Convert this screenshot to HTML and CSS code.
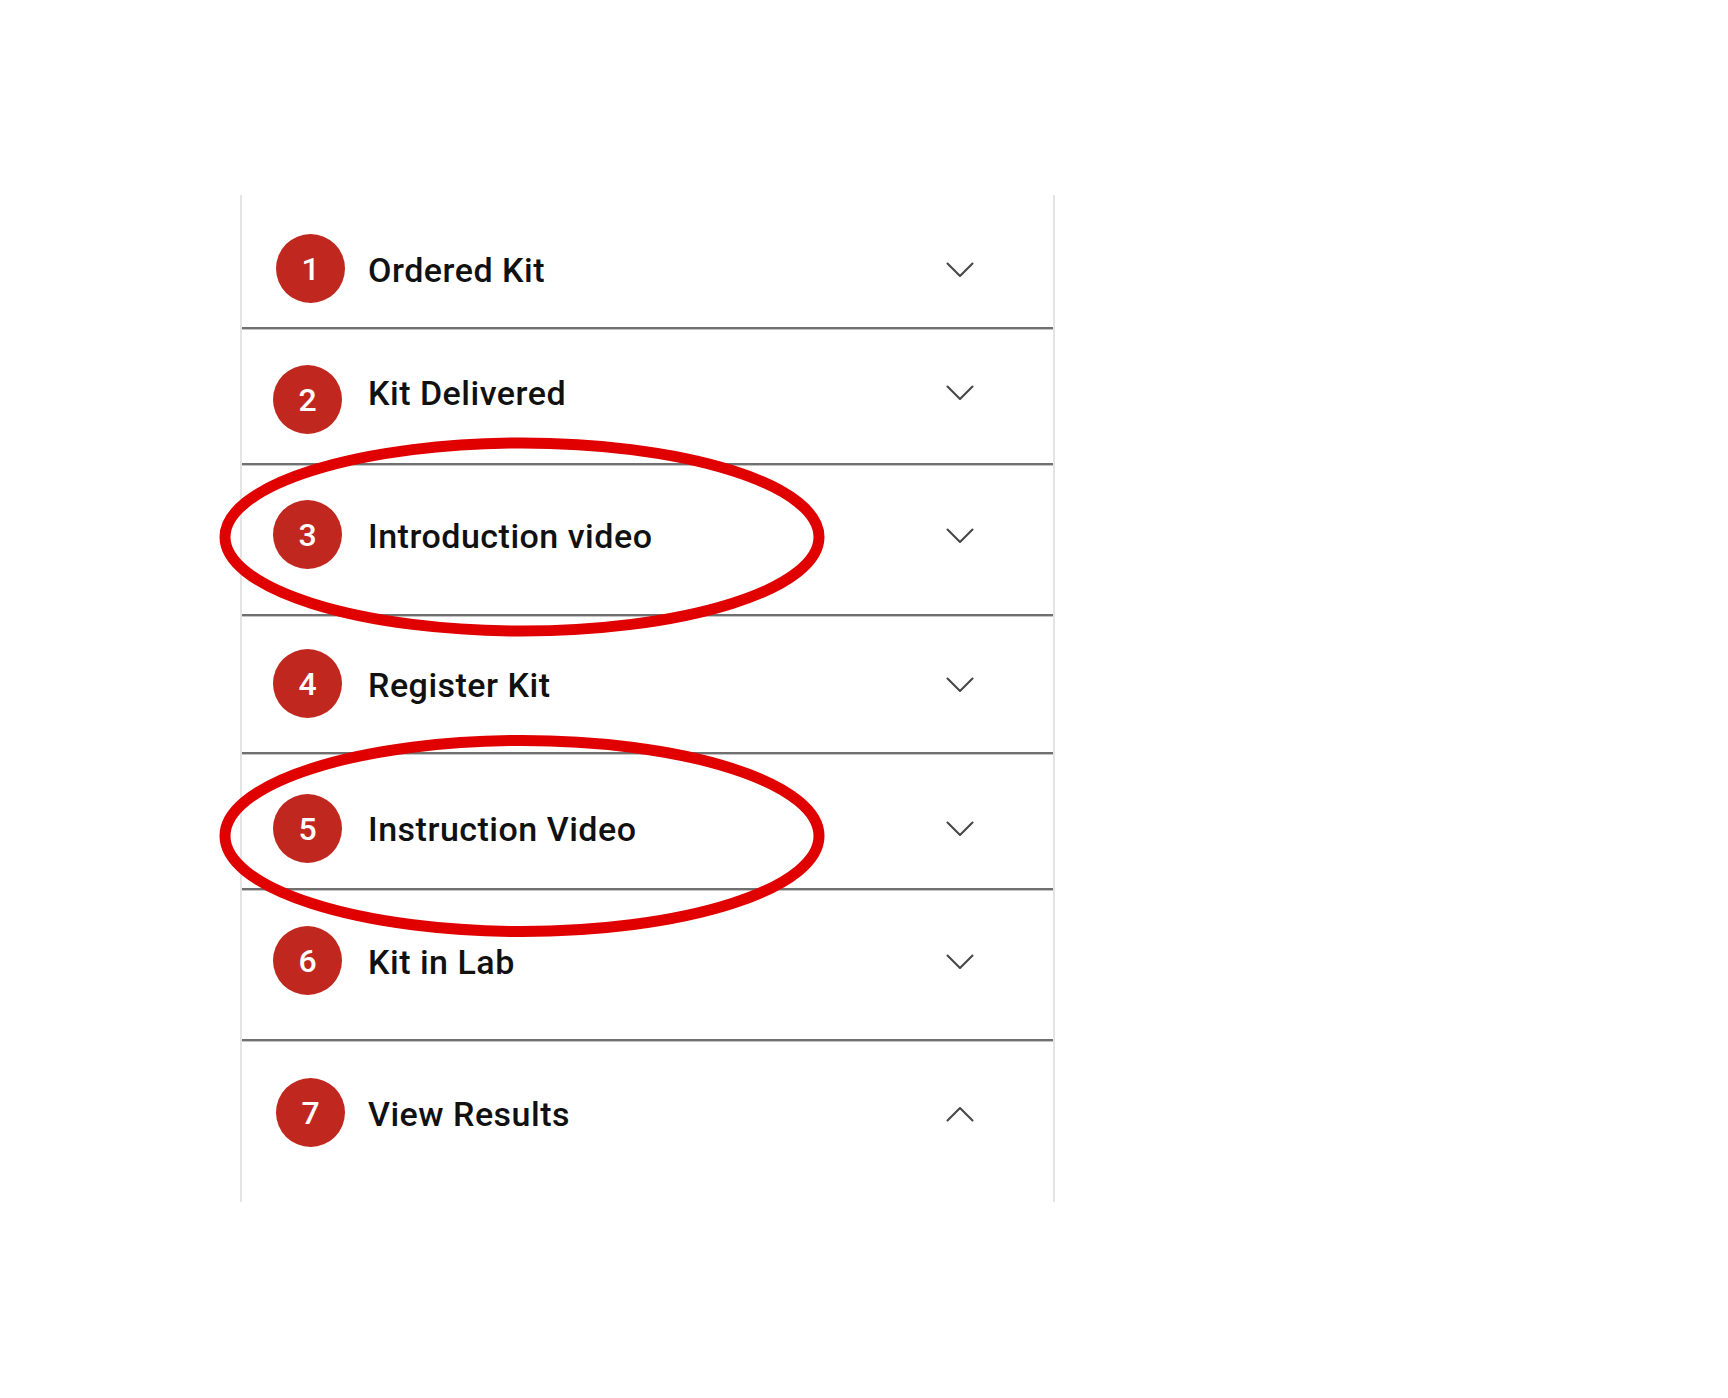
FILE: index.html
```html
<!DOCTYPE html>
<html lang="en">
<head>
<meta charset="utf-8">
<title>Kit steps</title>
<link rel="stylesheet" href="styles.css">
</head>
<body>
<div class="page">
  <section class="steps">
    <div class="step">
      <div class="step-head">
        <span class="badge">1</span>
        <span class="title">Ordered Kit</span>
        <svg class="chev" viewBox="0 0 28 16"><path d="M1.5 1.5 L14 14 L26.5 1.5"/></svg>
      </div>
    </div>
    <div class="step">
      <div class="step-head">
        <span class="badge">2</span>
        <span class="title">Kit Delivered</span>
        <svg class="chev" viewBox="0 0 28 16"><path d="M1.5 1.5 L14 14 L26.5 1.5"/></svg>
      </div>
    </div>
    <div class="step">
      <div class="step-head">
        <span class="badge">3</span>
        <span class="title">Introduction video</span>
        <svg class="chev" viewBox="0 0 28 16"><path d="M1.5 1.5 L14 14 L26.5 1.5"/></svg>
      </div>
    </div>
    <div class="step">
      <div class="step-head">
        <span class="badge">4</span>
        <span class="title">Register Kit</span>
        <svg class="chev" viewBox="0 0 28 16"><path d="M1.5 1.5 L14 14 L26.5 1.5"/></svg>
      </div>
    </div>
    <div class="step">
      <div class="step-head">
        <span class="badge">5</span>
        <span class="title">Instruction Video</span>
        <svg class="chev" viewBox="0 0 28 16"><path d="M1.5 1.5 L14 14 L26.5 1.5"/></svg>
      </div>
    </div>
    <div class="step">
      <div class="step-head">
        <span class="badge">6</span>
        <span class="title">Kit in Lab</span>
        <svg class="chev" viewBox="0 0 28 16"><path d="M1.5 1.5 L14 14 L26.5 1.5"/></svg>
      </div>
    </div>
    <div class="step">
      <div class="step-head">
        <span class="badge">7</span>
        <span class="title">View Results</span>
        <svg class="chev" viewBox="0 0 28 16"><path d="M1.5 14.5 L14 2 L26.5 14.5"/></svg>
      </div>
    </div>
  </section>

  <svg class="annotations" width="1728" height="1398" viewBox="0 0 1728 1398">
    <ellipse cx="522" cy="537" rx="297" ry="94"/>
    <ellipse cx="522" cy="836" rx="297" ry="95.5"/>
  </svg>
</div>
</body>
</html>
```

FILE: styles.css
```css
* { box-sizing: border-box; }

html, body {
  margin: 0;
  padding: 0;
  background: #ffffff;
}

body {
  font-family: Roboto, "Liberation Sans", Arial, sans-serif;
  width: 1728px;
  height: 1398px;
  overflow: hidden;
}

.page {
  position: relative;
  width: 1728px;
  height: 1398px;
  padding-top: 195px;
  padding-left: 240px;
}

.steps {
  width: 815px;
  height: 1007px;
  border-left: 2px solid #e4e4e4;
  border-right: 2px solid #e4e4e4;
  display: flex;
  flex-direction: column;
}

.step {
  border-bottom: 2px solid #707070;
  box-shadow: 0 1px 0 #c4c4c4;
  padding-left: 31px;
  padding-right: 79px;
}

.step:last-child {
  border-bottom: none;
  box-shadow: none;
}

.step:nth-child(1) { height: 134px; padding-top: 40px; }
.step:nth-child(2) { height: 136px; padding-top: 29px; }
.step:nth-child(3) { height: 151px; padding-top: 36px; }
.step:nth-child(4) { height: 138px; padding-top: 34px; }
.step:nth-child(5) { height: 136px; padding-top: 40px; }
.step:nth-child(6) { height: 151px; padding-top: 37px; }
.step:nth-child(7) { height: 161px; padding-top: 38px; }

.step:nth-child(2) .badge {
  margin-top: 14px;
}

.step:nth-child(1) .badge { margin-top: -2px; }
.step:nth-child(3) .badge,
.step:nth-child(4) .badge,
.step:nth-child(6) .badge,
.step:nth-child(7) .badge { margin-top: -2px; }

.step-head {
  display: flex;
  align-items: center;
  height: 69px;
}

.badge {
  flex: none;
  width: 69px;
  height: 69px;
  border-radius: 50%;
  background: #c0281f;
  color: #ffffff;
  font-size: 32px;
  font-weight: 500;
  display: flex;
  align-items: center;
  justify-content: center;
  margin-right: 26px;
}

.step:first-child .badge,
.step:last-child .badge {
  margin-left: 3px;
  margin-right: 23px;
}

.title {
  font-size: 34px;
  font-weight: 500;
  color: #111111;
  letter-spacing: 0.5px;
}

.chev {
  margin-left: auto;
  width: 28px;
  height: 16px;
  fill: none;
  stroke: #474747;
  stroke-width: 2.1;
  stroke-linecap: round;
  stroke-linejoin: round;
}

.annotations {
  position: absolute;
  left: 0;
  top: 0;
  pointer-events: none;
}

.annotations ellipse {
  fill: none;
  stroke: #e00000;
  stroke-width: 11;
}
```
